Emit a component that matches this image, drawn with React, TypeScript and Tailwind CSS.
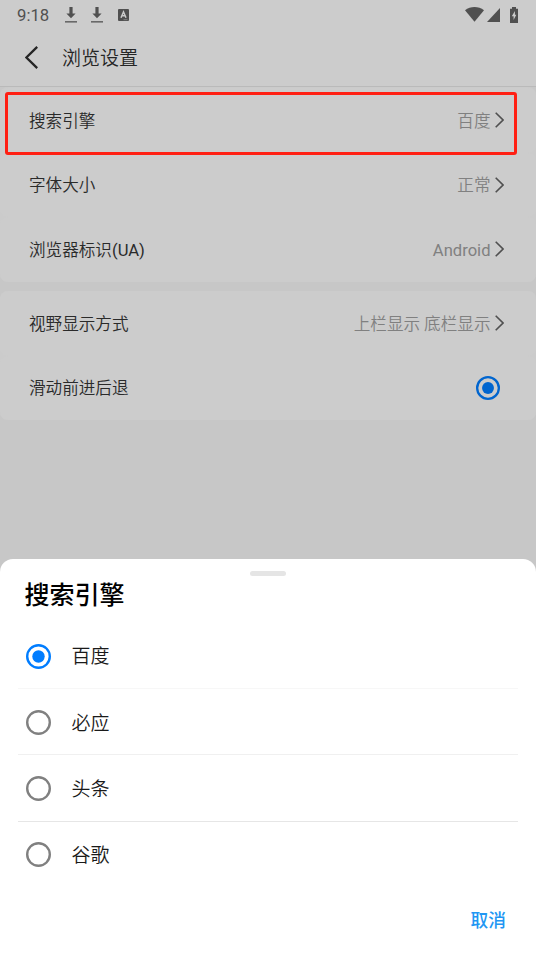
import React, { useState } from "react";
import clsx from "clsx";

const engines = [
  { name: "百度", line: "border-[#f7f7f7]" },
  { name: "必应", line: "border-[#f0f0f0]" },
  { name: "头条", line: "border-[#e6e6e6]" },
  { name: "谷歌", line: "border-transparent" },
];

function DownloadIcon() {
  return (
    <svg width="12" height="16" viewBox="0 0 12 16" fill="#505050">
      <path d="M4.4 0h3.2v6.4h3L6 11.2 1.4 6.4h3z" />
      <path d="M0 14.2h12v1.3H0z" />
    </svg>
  );
}

function StatusBar() {
  return (
    <div className="flex h-[29px] shrink-0 items-center pl-[17px] pr-[18px] text-[#505050]">
      <span className="w-12 pt-0.5 text-[16.7px] leading-[28px] font-normal">9:18</span>
      <DownloadIcon />
      <span className="ml-[14px] flex">
        <DownloadIcon />
      </span>
      <svg className="ml-[15px]" width="11" height="12" viewBox="0 0 11 12">
        <rect width="11" height="12" rx="1" fill="#505050" />
        <path d="M3 8.7 5.5 2.8 8 8.7M3.8 6.8h3.4" fill="none" stroke="#ccc" strokeWidth="1.5" />
        <path d="M5.5 10.7h4" stroke="#999" strokeWidth="0.7" />
      </svg>
      <div className="ml-auto flex items-center">
        <svg width="19" height="15" viewBox="0 0 19 15" fill="#505050">
          <path d="M0 3.3C5.5-1.1 13.5-1.1 19 3.3L9.5 14.8z" />
        </svg>
        <svg className="ml-[3px]" width="13" height="14" viewBox="0 0 13 14" fill="#505050">
          <path d="M13 0v14H0z" />
        </svg>
        <svg className="ml-[10px]" width="8" height="16" viewBox="0 0 8 16">
          <path d="M2 0h4v1.7h2V16H0V1.7h2z" fill="#505050" />
          <path d="M4.9 4 1.8 9.2h1.8v3.9l2.7-5.3H4.9z" fill="#ccc" />
        </svg>
      </div>
    </div>
  );
}

function Radio({ checked, dimmed }: { checked: boolean; dimmed?: boolean }) {
  const color = checked ? (dimmed ? "#0065cf" : "#007dff") : "#808080";
  return (
    <svg width={dimmed ? 24 : 25} height={dimmed ? 24 : 25} viewBox="0 0 25 25" className="shrink-0">
      <circle cx="12.5" cy="12.5" r="11.3" fill="none" stroke={color} strokeWidth="2.4" />
      {checked && <circle cx="12.5" cy="12.5" r="6.2" fill={color} />}
    </svg>
  );
}

function Row({ label, value, children }: { label: React.ReactNode; value?: React.ReactNode; children?: React.ReactNode }) {
  return (
    <div className="flex h-[64.5px] items-center justify-between rounded-lg bg-[#ccc] pl-[29px] pr-8 text-[16.6px] text-[#2a2a2a]">
      <span className="pt-1">{label}</span>
      {value && (
        <span className="flex items-center text-[#808080]">
          <span className="pt-1">{value}</span>
          <svg className="ml-[4.5px]" width="9" height="16" viewBox="0 0 9 16" fill="none" stroke="#505050" strokeWidth="1.6">
            <path d="M.7.7 8 8 .7 15.3" />
          </svg>
        </span>
      )}
      {children}
    </div>
  );
}

export default function App() {
  const [selected, setSelected] = useState("百度");

  return (
    <div className="flex h-[954px] w-[536px] flex-col overflow-hidden bg-[#c7c7c7] font-[Roboto,'Noto_Sans_CJK_SC',sans-serif] [font-weight:350]">
      <div className="relative flex h-[559px] shrink-0 flex-col">
        <div className="h-[87px] shrink-0 border-b border-[#bababa] bg-[#ccc]">
          <StatusBar />
          <div className="flex h-[56px] items-center pl-[25px]">
            <svg width="13" height="23" viewBox="0 0 13 23" fill="none" stroke="#252525" strokeWidth="2.3">
              <path d="M12.2.9 1.4 11.5l10.8 10.6" />
            </svg>
            <h1 className="ml-6 pt-1 text-[19px] [font-weight:350] text-[#252525]">浏览设置</h1>
          </div>
        </div>

        <div className="rounded-lg bg-[#cbcbcb] pt-px">
          <Row label="搜索引擎" value="百度" />
          <Row label="字体大小" value="正常" />
          <Row
            label={<>浏览器标识<span className="font-normal">(UA)</span></>}
            value={<span className="font-normal">Android</span>}
          />
        </div>
        <div className="mt-[9.5px] rounded-lg bg-[#cbcbcb]">
          <Row label="视野显示方式" value="上栏显示 底栏显示" />
          <Row label="滑动前进后退">
            <span className="mr-1">
              <Radio checked dimmed />
            </span>
          </Row>
        </div>

        {/* highlight over the first row */}
        <div className="pointer-events-none absolute left-[5px] top-[92px] h-[63px] w-[512px] rounded-[3px] border-3 border-[#ff1f13]" />
      </div>

      {/* Bottom sheet */}
      <div className="flex flex-1 flex-col rounded-t-[13px] bg-white">
        <div className="mx-auto mt-3 h-[5px] w-9 shrink-0 rounded-full bg-[#e5e5e5]" />
        <h2 className="ml-[24.5px] h-[47px] text-[25px] leading-[39px] font-medium text-black">搜索引擎</h2>
        <div className="mx-[18px]">
          {engines.map((engine) => (
            <button
              key={engine.name}
              onClick={() => setSelected(engine.name)}
              className={clsx("flex h-[66.2px] w-full items-center border-b pl-2 pt-px text-[19px] text-[#1a1a1a]", engine.line)}
            >
              <Radio checked={selected === engine.name} />
              <span className="ml-[20.5px] pt-[3px]">{engine.name}</span>
            </button>
          ))}
        </div>
        <button className="mr-[30px] mt-[20.5px] self-end text-[17.7px] font-medium text-[#2196f3]">取消</button>
      </div>
    </div>
  );
}
